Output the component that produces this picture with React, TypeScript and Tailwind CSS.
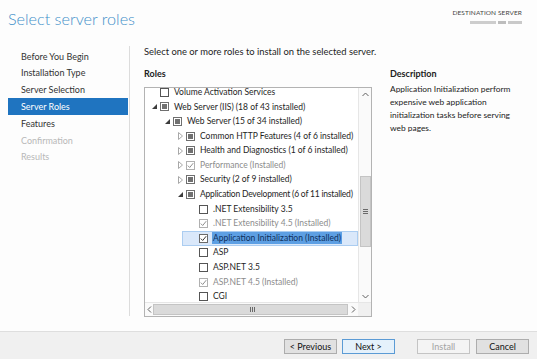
type Cb = "empty" | "partial" | "done" | "checked";
type Exp = "none" | "open" | "closed";

interface Row {
    lvl: number;
    exp: Exp;
    cb: Cb;
    text: string;
    dim?: boolean;
    tight?: boolean;
    selected?: boolean;
}

const rows: Row[] = [
    { lvl: 0, exp: "none", cb: "empty", text: "Volume Activation Services" },
    { lvl: 0, exp: "open", cb: "partial", text: "Web Server (IIS) (18 of 43 installed)" },
    { lvl: 1, exp: "open", cb: "partial", text: "Web Server (15 of 34 installed)" },
    { lvl: 2, exp: "closed", cb: "partial", text: "Common HTTP Features (4 of 6 installed)" },
    { lvl: 2, exp: "closed", cb: "partial", text: "Health and Diagnostics (1 of 6 installed)" },
    { lvl: 2, exp: "closed", cb: "done", text: "Performance (Installed)", dim: true },
    { lvl: 2, exp: "closed", cb: "partial", text: "Security (2 of 9 installed)" },
    { lvl: 2, exp: "open", cb: "partial", text: "Application Development (6 of 11 installed)", tight: true },
    { lvl: 3, exp: "none", cb: "empty", text: ".NET Extensibility 3.5" },
    { lvl: 3, exp: "none", cb: "done", text: ".NET Extensibility 4.5 (Installed)", dim: true },
    { lvl: 3, exp: "none", cb: "checked", text: "Application Initialization (Installed)", selected: true },
    { lvl: 3, exp: "none", cb: "empty", text: "ASP" },
    { lvl: 3, exp: "none", cb: "empty", text: "ASP.NET 3.5" },
    { lvl: 3, exp: "none", cb: "done", text: "ASP.NET 4.5 (Installed)", dim: true },
    { lvl: 3, exp: "none", cb: "empty", text: "CGI" },
];

const indent = ["pl-[4px]", "pl-[17px]", "pl-[30px]", "pl-[43px]"];

const steps = [
    { label: "Before You Begin" },
    { label: "Installation Type" },
    { label: "Server Selection" },
    { label: "Server Roles", active: true },
    { label: "Features" },
    { label: "Confirmation", disabled: true },
    { label: "Results", disabled: true },
];

function Expander({ exp }: { exp: Exp }) {
    return (
        <div className="w-[11px] h-full flex items-center justify-center shrink-0">
            {exp === "open" && (
                <svg width="5" height="5" viewBox="0 0 5 5">
                    <path d="M5 0 L5 5 L0 5 Z" fill="#3c3c3c" />
                </svg>
            )}
            {exp === "closed" && (
                <svg width="5" height="8" viewBox="0 0 5 8">
                    <path d="M0.5 0.5 L4.5 4 L0.5 7.5 Z" fill="none" stroke="#a8a8a8" />
                </svg>
            )}
        </div>
    );
}

function Check({ cb }: { cb: Cb }) {
    if (cb === "partial") {
        return (
            <div className="w-[9px] h-[9px] border border-[#6f6f6f] bg-white flex items-center justify-center shrink-0">
                <div className="w-[5px] h-[5px] bg-[#707070]" />
            </div>
        );
    }
    if (cb === "empty") {
        return <div className="w-[9px] h-[9px] border border-[#555555] bg-white shrink-0" />;
    }
    const dim = cb === "done";
    return (
        <div
            className={`w-[9px] h-[9px] border bg-white flex items-center justify-center shrink-0 ${dim ? "border-[#b0b0b0]" : "border-[#6a6a6a]"}`}
        >
            <svg width="7" height="7" viewBox="0 0 7 7">
                <path d="M0.8 3.6 L2.7 5.5 L6.2 1.2" fill="none" stroke={dim ? "#8f8f8f" : "#3a3a3a"} strokeWidth="1" />
            </svg>
        </div>
    );
}

function TreeRow({ row }: { row: Row }) {
    if (row.selected) {
        return (
            <div className="h-[14.6px] pl-[37px] flex shrink-0">
                <div className="flex-1 h-full flex items-center pl-[5px] bg-[#dae8fa] border border-[#abcdf1]">
                    <Expander exp={row.exp} />
                    <Check cb={row.cb} />
                    <span className="ml-[4px] px-[1px] bg-[#5d9fe3] text-[#0f2f5c] whitespace-nowrap leading-[12px]">
                        {row.text}
                    </span>
                </div>
            </div>
        );
    }
    return (
        <div className={`h-[14.6px] flex items-center shrink-0 ${indent[row.lvl]}`}>
            <Expander exp={row.exp} />
            <Check cb={row.cb} />
            <span
                className={`ml-[5px] whitespace-nowrap ${row.dim ? "text-[#8c8c8c]" : "text-[#1e1e1e]"} ${row.tight ? "tracking-[-0.2px]" : ""}`}
            >
                {row.text}
            </span>
        </div>
    );
}

function Arrow({ dir }: { dir: "up" | "down" | "left" | "right" }) {
    const d = {
        up: "M0.5 4 L3.5 1 L6.5 4",
        down: "M0.5 1 L3.5 4 L6.5 1",
        left: "M4 0.5 L1 3.5 L4 6.5",
        right: "M1 0.5 L4 3.5 L1 6.5",
    }[dir];
    const vert = dir === "up" || dir === "down";
    return (
        <svg width={vert ? 7 : 5} height={vert ? 5 : 7} viewBox={vert ? "0 0 7 5" : "0 0 5 7"}>
            <path d={d} fill="none" stroke="#606060" strokeWidth="1" />
        </svg>
    );
}

function RolesTree() {
    return (
        <div className="w-[228px] h-[230px] border border-[#b3b3b3] bg-white flex flex-col text-[8.5px]">
            <div className="flex-1 flex min-h-0">
                <div className="flex-1 overflow-hidden">
                    <div className="-mt-[3px] flex flex-col">
                        {rows.map((row) => (
                            <TreeRow key={row.text} row={row} />
                        ))}
                    </div>
                </div>
                <div className="w-[13px] border-l border-[#e6e6e6] bg-[#fafafa] flex flex-col items-center">
                    <div className="h-[12px] flex items-center justify-center">
                        <Arrow dir="up" />
                    </div>
                    <div className="flex-1 w-full relative">
                        <div className="absolute left-[1px] right-0 top-[76px] h-[71px] bg-[#dadada] border border-[#c4c4c4] flex flex-col items-center justify-center gap-[1px]">
                            <div className="w-[5px] h-px bg-[#6a6a6a]" />
                            <div className="w-[5px] h-px bg-[#6a6a6a]" />
                            <div className="w-[5px] h-px bg-[#6a6a6a]" />
                        </div>
                    </div>
                    <div className="h-[12px] flex items-center justify-center">
                        <Arrow dir="down" />
                    </div>
                </div>
            </div>
            <div className="h-[14px] flex border-t border-[#e6e6e6] bg-[#fafafa]">
                <div className="w-[8px] flex items-center justify-center">
                    <Arrow dir="left" />
                </div>
                <div className="w-[195px] my-[1px] bg-[#dadada] border border-[#c4c4c4] flex items-center justify-end pr-[92px] gap-[1px]">
                    <div className="w-px h-[5px] bg-[#6a6a6a]" />
                    <div className="w-px h-[5px] bg-[#6a6a6a]" />
                    <div className="w-px h-[5px] bg-[#6a6a6a]" />
                </div>
                <div className="flex-1 flex items-center justify-center">
                    <Arrow dir="right" />
                </div>
                <div className="w-[13px] bg-[#f0f0f0]" />
            </div>
        </div>
    );
}

function Button({ label, variant }: { label: string; variant?: "default" | "disabled" }) {
    const cls =
        variant === "default"
            ? "border-[#5b9bd5] bg-[#e5f1fb] text-[#111111]"
            : variant === "disabled"
              ? "border-[#c4c4c4] bg-[#f4f4f4] text-[#a3a3a3]"
              : "border-[#adadad] bg-[#e1e1e1] text-[#111111]";
    return (
        <div className={`w-[53px] h-[15px] border flex items-center justify-center text-[9px] ${cls}`}>
            {label}
        </div>
    );
}

export default function App() {
    return (
        <div
            className="w-[537px] h-[359px] bg-[#fdfdfd] flex flex-col overflow-hidden text-[9px] text-[#1e1e1e]"
            style={{ fontFamily: "Lato, 'Open Sans', sans-serif" }}
        >
            <div className="h-[40px] flex justify-between shrink-0">
                <div className="pl-[8px] pt-[6px] text-[16.2px] font-light text-[#3f90c9] leading-[26px]">
                    Select server roles
                </div>
                <div className="pr-[15px] pt-[9px] flex flex-col items-end">
                    <div className="text-[6.5px] text-[#444444] tracking-[0.1px] leading-[8px]">DESTINATION SERVER</div>
                    <div className="mt-[4px] flex gap-[2px]">
                        <div className="w-[26px] h-[3px] bg-[#cdcdcd]" />
                        <div className="w-[8px] h-[3px] bg-[#bdbdbd]" />
                        <div className="w-[14px] h-[3px] bg-[#c9c9c9]" />
                    </div>
                </div>
            </div>

            <div className="flex-1 flex">
                <div className="w-[130px] h-[270px] mt-[6px] border-r border-[#dcdcdc] pt-[2px] shrink-0">
                    {steps.map((s) => (
                        <div
                            key={s.label}
                            className={`ml-[8px] mr-[1px] h-[16.8px] flex items-center pl-[13px] ${
                                s.active ? "bg-[#1f74c0] text-white" : s.disabled ? "text-[#b8b8b8]" : "text-[#333333]"
                            }`}
                        >
                            {s.label}
                        </div>
                    ))}
                </div>

                <div className="flex-1 pl-[14px] pt-[6px]">
                    <div className="h-[12px] leading-[12px] text-[9.4px]">
                        Select one or more roles to install on the selected server.
                    </div>
                    <div className="flex gap-[18px] mt-[10px]">
                        <div className="flex flex-col">
                            <div className="font-bold h-[12px] leading-[12px] text-[#222222]">Roles</div>
                            <div className="mt-[7px]">
                                <RolesTree />
                            </div>
                        </div>
                        <div className="flex flex-col w-[140px]">
                            <div className="font-bold h-[12px] leading-[12px] text-[#222222]">Description</div>
                            <div className="mt-[3px] leading-[13px] text-[8.4px] text-[#222222]">
                                Application Initialization perform
                                <br />
                                expensive web application
                                <br />
                                initialization tasks before serving
                                <br />
                                web pages.
                            </div>
                        </div>
                    </div>
                </div>
            </div>

            <div className="h-[28px] shrink-0 border-t border-[#dedede] bg-[#f0f0f0] flex items-start justify-end pt-[7px] pr-[8px]">
                <Button label="< Previous" />
                <div className="ml-[5px]">
                    <Button label="Next >" variant="default" />
                </div>
                <div className="ml-[22px]">
                    <Button label="Install" variant="disabled" />
                </div>
                <div className="ml-[6px]">
                    <Button label="Cancel" />
                </div>
            </div>
        </div>
    );
}
